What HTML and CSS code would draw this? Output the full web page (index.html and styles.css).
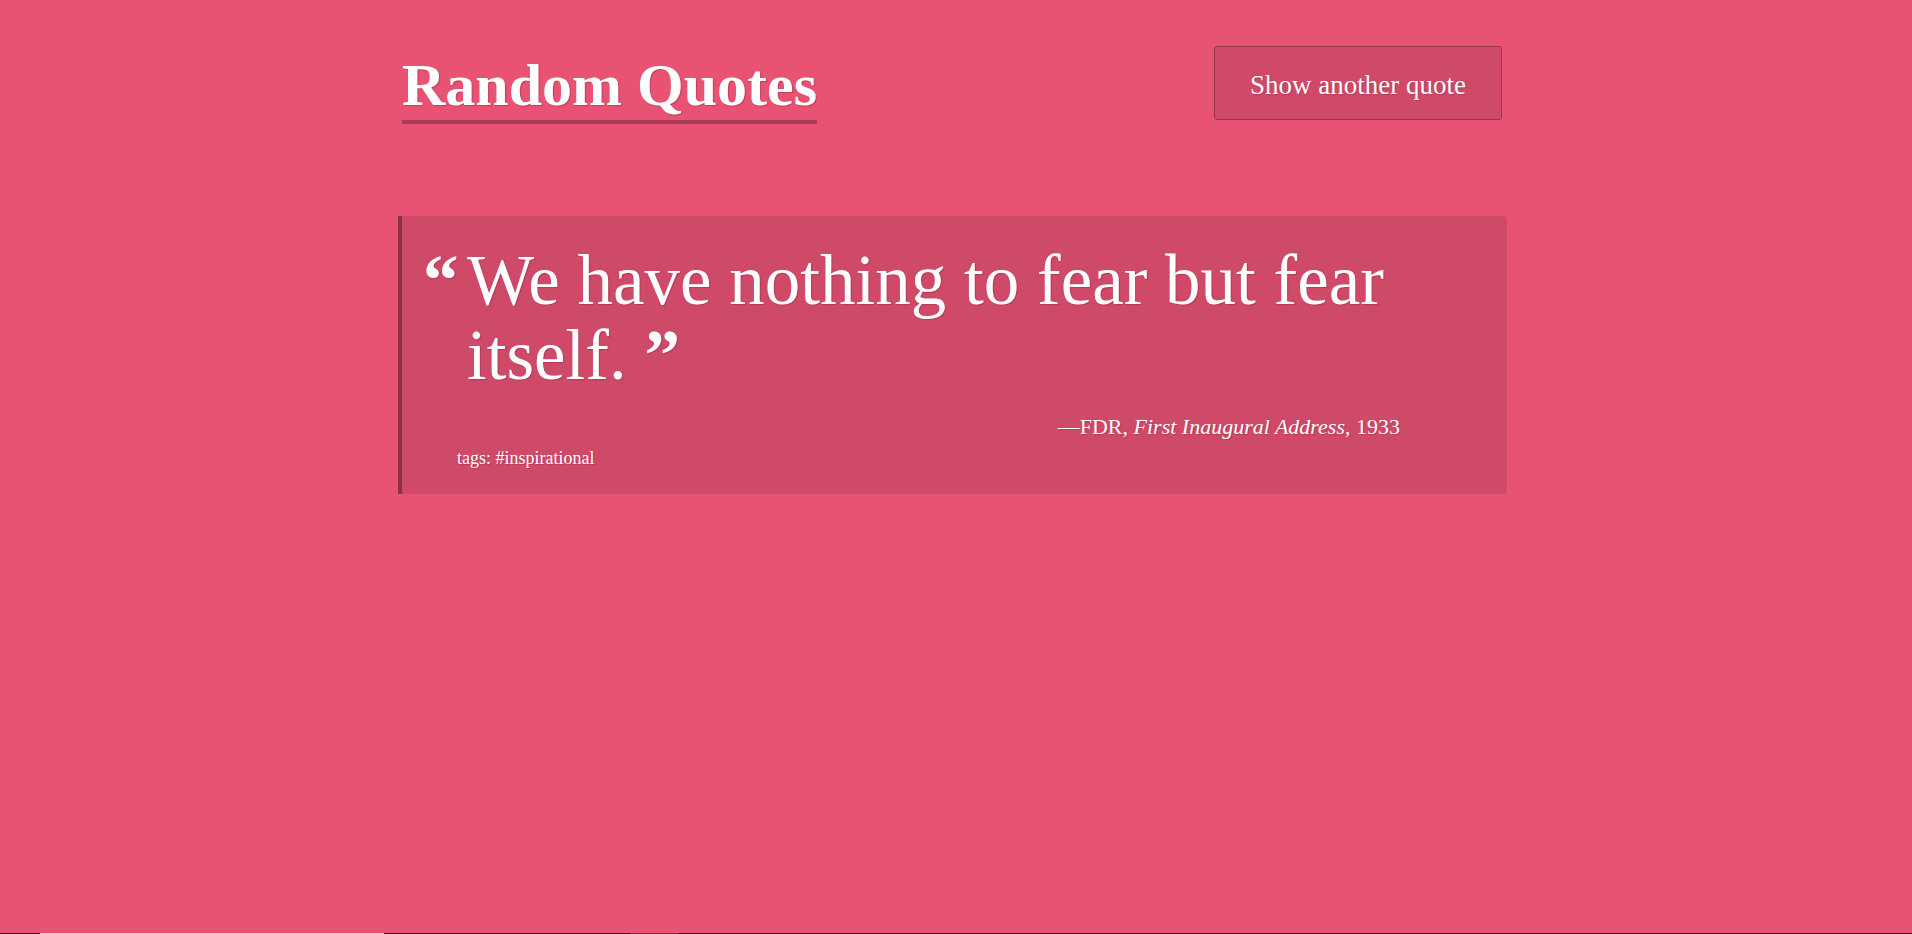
FILE: index.html
```html
<!DOCTYPE html>
<html lang="en">
<head>
<meta charset="utf-8">
<title>Random Quotes</title>
<link rel="stylesheet" href="styles.css">
</head>
<body>
<div class="page">
  <header class="header">
    <h1 class="title">Random Quotes</h1>
    <button class="next-btn" type="button">Show another quote</button>
  </header>
  <blockquote class="quote">
    <span class="mark">“</span>
    <div class="body">
      <p class="text">We have nothing to fear but fear itself. <span class="close">”</span></p>
      <p class="cite">—FDR, <i>First Inaugural Address</i>, 1933</p>
      <p class="tags">tags: #inspirational</p>
    </div>
  </blockquote>
</div>
<div class="edge-strip"></div>
</body>
</html>
```

FILE: styles.css
```css
html, body {
  margin: 0;
  padding: 0;
  height: 100%;
}
body {
  background: #e85374;
  color: #ffffff;
  font-family: "Liberation Serif", "Times New Roman", serif;
  overflow: hidden;
}
.page {
  width: 1109px;
  margin-left: calc(50% - 558px);
}
.header {
  display: flex;
  justify-content: space-between;
  align-items: flex-start;
  padding: 46px 5px 0 4px;
  height: 78px;
}
.title {
  margin: 4px 0 0 0;
  font-size: 60px;
  line-height: 70px;
  font-weight: bold;
  border-bottom: 4px solid #a63c59;
  text-shadow: 1px 1px 1px rgba(120, 20, 50, 0.35);
}
.next-btn {
  box-sizing: border-box;
  width: 288px;
  height: 74px;
  padding: 4px 0 0 0;
  background: #cf4a69;
  border: 1px solid #9a3450;
  border-radius: 3px;
  color: #ffffff;
  font-family: "Liberation Serif", "Times New Roman", serif;
  font-size: 27px;
  line-height: 27px;
  text-shadow: 1px 1px 1px rgba(120, 20, 50, 0.3);
  cursor: pointer;
}
.quote {
  display: flex;
  align-items: flex-start;
  box-sizing: border-box;
  margin: 92px 0 0 0;
  height: 278px;
  padding: 27px 40px 0 21px;
  background: #cf4a69;
  border-left: 4px solid #8e2e49;
  border-radius: 0 4px 4px 0;
}
.mark {
  flex: 0 0 44px;
  font-size: 71px;
  line-height: 75px;
  font-weight: bold;
  text-shadow: 1px 1px 1px rgba(120, 20, 50, 0.3);
}
.body {
  flex: 1;
}
.text {
  margin: 0;
  font-size: 71px;
  line-height: 75px;
  text-shadow: 1px 1px 1px rgba(120, 20, 50, 0.3);
}
.close {
  font-weight: bold;
}
.cite {
  margin: 22px 67px 0 0;
  text-align: right;
  font-size: 22px;
  line-height: 24px;
  text-shadow: 1px 1px 1px rgba(120, 20, 50, 0.3);
}
.tags {
  margin: 8px 0 0 -10px;
  font-size: 18px;
  line-height: 22px;
  text-shadow: 1px 1px 1px rgba(120, 20, 50, 0.3);
}
.edge-strip {
  position: fixed;
  left: 0;
  right: 0;
  bottom: 0;
  height: 1px;
  background: linear-gradient(to right,
    #2a1820 0, #2a1820 40px,
    #d9c9cd 40px, #d9c9cd 384px,
    #2a1820 384px, #2a1820 630px,
    #5a4048 630px, #5a4048 678px,
    #2a1820 678px, #2a1820 100%);
}
```
